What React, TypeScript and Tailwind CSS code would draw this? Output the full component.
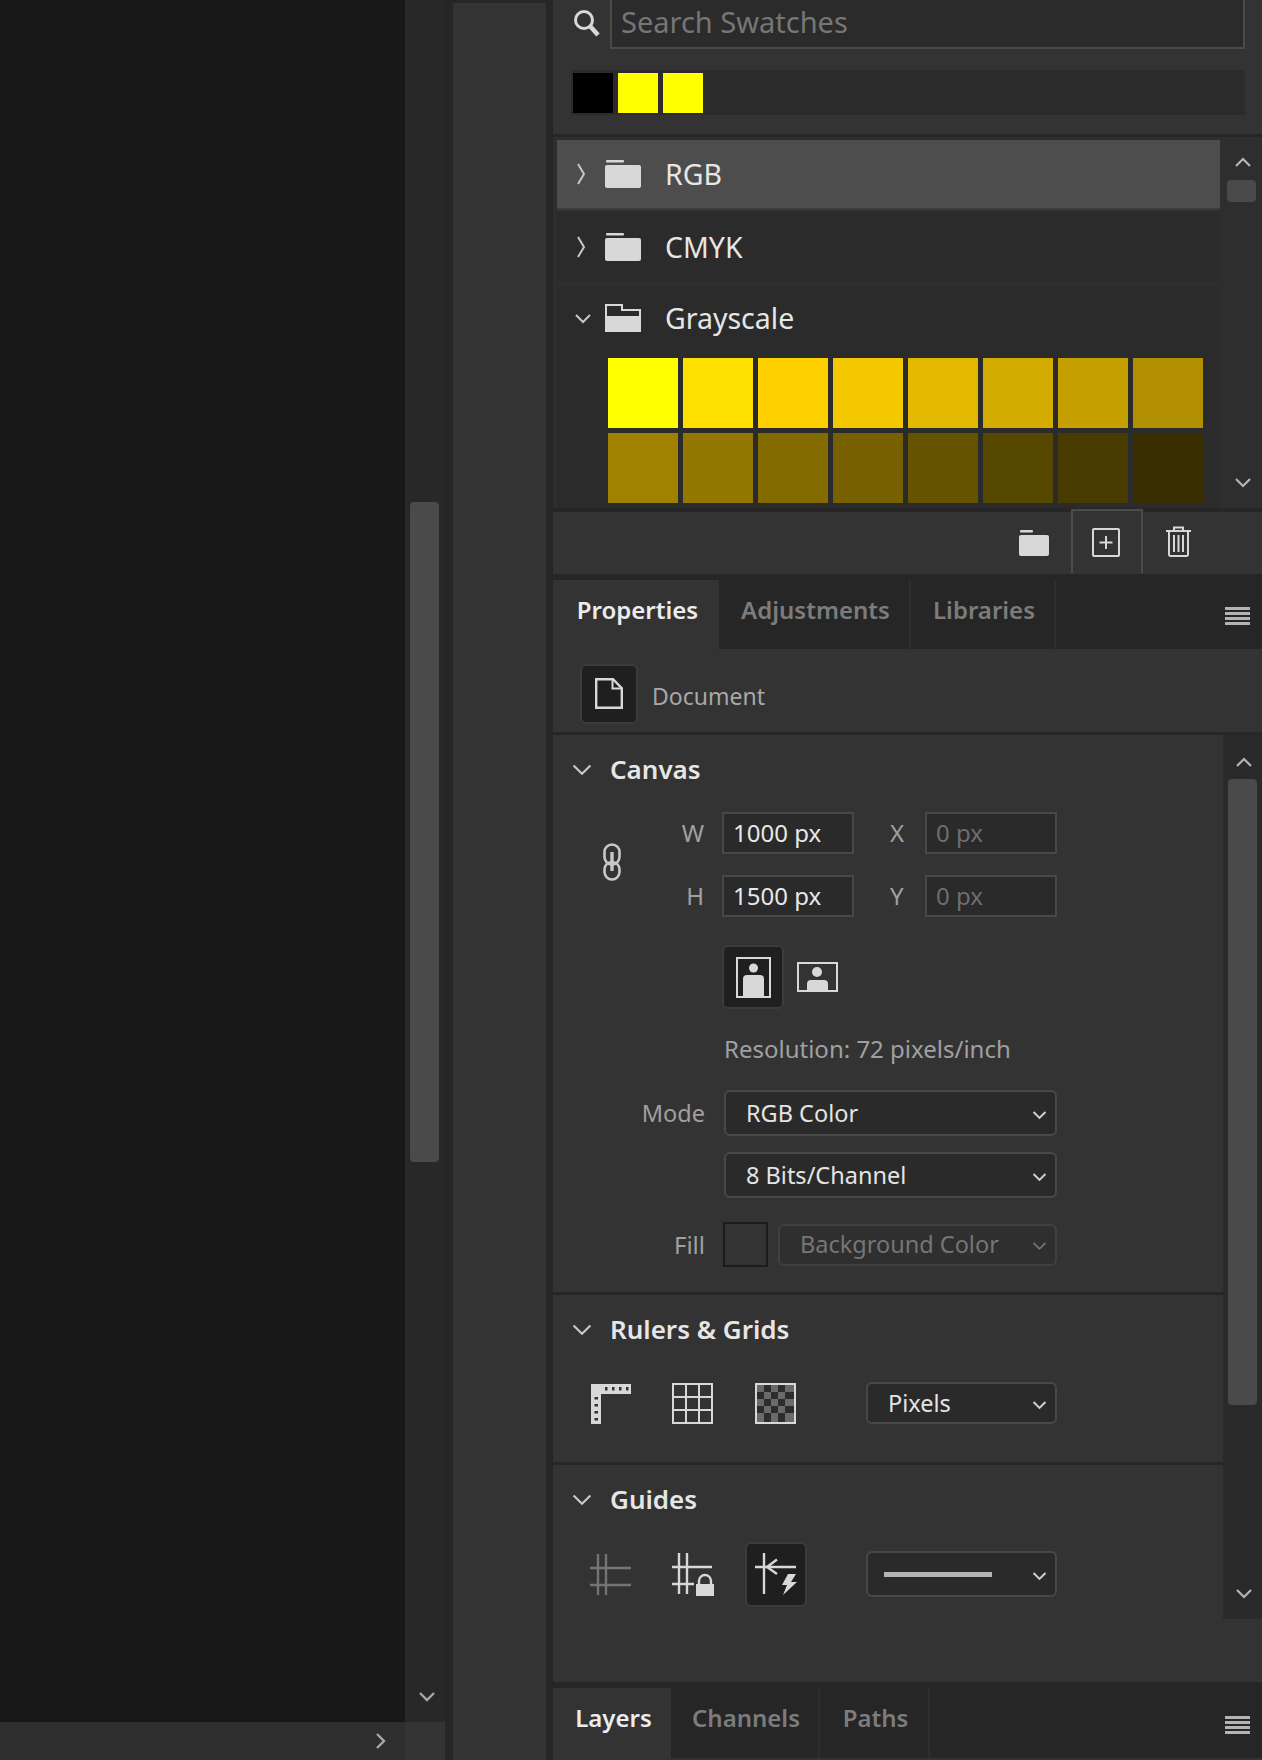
const font = "font-['Noto_Sans','Open_Sans',sans-serif]";

const row1 = ["#ffff00", "#ffe000", "#ffd000", "#f4c800", "#e3b800", "#d4ab00", "#c6a000", "#b18f00"];
const row2 = ["#a08200", "#927700", "#846b00", "#766000", "#655300", "#574800", "#483b00", "#382e00"];

const Chevron = ({ dir = "down", size = 20, color = "#c4c4c4", sw = 2 }: { dir?: string; size?: number; color?: string; sw?: number }) => {
  const d: Record<string, string> = {
    down: "M3 7l7 7 7-7",
    up: "M3 13l7-7 7 7",
    right: "M7 3l7 7-7 7",
  };
  return (
    <svg width={size} height={size} viewBox="0 0 20 20" fill="none" className="shrink-0">
      <path d={d[dir]} stroke={color} strokeWidth={sw} />
    </svg>
  );
};

const Hamburger = () => (
  <div className="flex flex-col gap-[2px] w-[25px]">
    <div className="h-[3px] bg-[#b4b4b4]" />
    <div className="h-[3px] bg-[#b4b4b4]" />
    <div className="h-[3px] bg-[#b4b4b4]" />
    <div className="h-[3px] bg-[#b4b4b4]" />
  </div>
);

const FolderClosed = () => (
  <svg width="36" height="28" viewBox="0 0 36 28" className="shrink-0">
    <rect x="1" y="0" width="18" height="2.5" rx="1" fill="#d8d8d8" />
    <rect x="0" y="5" width="36" height="23" rx="2" fill="#d8d8d8" />
  </svg>
);

const FolderOpen = () => (
  <svg width="36" height="28" viewBox="0 0 36 28" className="shrink-0">
    <path d="M1 1h16v5h18v21H1z" fill="none" stroke="#d8d8d8" strokeWidth="2" />
    <rect x="0" y="12" width="36" height="16" rx="2" fill="#d8d8d8" />
  </svg>
);

const Field = ({ value, dim }: { value: string; dim?: boolean }) => (
  <div className={`w-[132px] h-[42px] border-2 border-[#484848] bg-[#2a2a2a] flex items-center pl-[9px] text-[24px] ${dim ? "text-[#6e6e6e]" : "text-[#e8e8e8]"}`}>
    {value}
  </div>
);

const Select = ({ className, children }: { className: string; children: React.ReactNode }) => (
  <div className={`border-2 border-[#484848] rounded-md bg-[#2a2a2a] flex items-center justify-between pr-[7px] text-[23.5px] text-[#e4e4e4] ${className}`}>
    {children}
    <div className="pt-[2px]">
      <Chevron size={17} color="#d0d0d0" sw={2.4} />
    </div>
  </div>
);

const SwatchGroup = ({ name, open, active }: { name: string; open?: boolean; active?: boolean }) => (
  <div className={`flex items-center pl-[16px] ${open ? "h-[67px] pb-[3px]" : "h-[68px]"} ${active ? "bg-[#4d4d4d]" : "bg-[#2b2b2b]"}`}>
    {open ? (
      <Chevron size={20} color="#c8c8c8" />
    ) : (
      <svg width="20" height="24" viewBox="0 0 20 24" fill="none" className="shrink-0">
        <path d="M5 2l6 10-6 10" stroke="#c8c8c8" strokeWidth="2" />
      </svg>
    )}
    <div className="ml-[12px]">{open ? <FolderOpen /> : <FolderClosed />}</div>
    <span className="ml-[24px] pt-[2px] text-[28.500px] text-[#e6e6e6]">{name}</span>
  </div>
);

const Tabs = ({ tabs, widths }: { tabs: string[]; widths: string[] }) => (
  <div className="flex items-stretch h-[70px] bg-[#262626]">
    {tabs.map((t, i) => (
      <div
        key={t}
        className={`${widths[i]} flex items-center justify-center pb-[10px] pl-[3px] text-[24px] font-semibold ${i === 0 ? "bg-[#333333] text-[#ececec]" : "text-[#7c7c7c] border-r-2 border-[#2e2e2e]"}`}
      >
        {t}
      </div>
    ))}
    <div className="flex-1 flex items-center justify-end pr-[12px] pt-[3px]">
      <Hamburger />
    </div>
  </div>
);

const SectionHead = ({ title }: { title: string }) => (
  <div className="flex items-center h-[34px] pl-[17px]">
    <Chevron size={24} color="#c8c8c8" sw={1.8} />
    <span className="ml-[16px] text-[26px] font-semibold text-[#e6e6e6]">{title}</span>
  </div>
);

const Divider = () => <div className="h-[3px] bg-[#262626]" />;

export default function App() {
  return (
    <div className={`flex w-[1262px] h-[1760px] overflow-hidden bg-[#262626] ${font}`}>
      {/* canvas edge + scroller */}
      <div className="w-[445px] flex flex-col shrink-0">
        <div className="flex-1 flex">
          <div className="w-[405px] bg-[#181818]" />
          <div className="w-[40px] bg-[#282828] flex flex-col items-center pt-[502px] pr-[1px]">
            <div className="w-[29px] h-[660px] bg-[#4a4a4a] rounded-sm" />
            <div className="mt-[524px] ml-[4px]">
              <Chevron size={20} color="#a8a8a8" sw={2.4} />
            </div>
          </div>
        </div>
        <div className="h-[38px] flex">
          <div className="w-[405px] bg-[#2e2e2e] flex items-center justify-end pr-[15px]">
            <Chevron dir="right" size={20} color="#a8a8a8" sw={2.4} />
          </div>
          <div className="w-[40px] bg-[#333333]" />
        </div>
      </div>

      {/* tool strip */}
      <div className="ml-[8px] mt-[3px] w-[93px] bg-[#333333] shrink-0" />

      {/* right dock */}
      <div className="ml-[7px] w-[709px] shrink-0 flex flex-col bg-[#262626]">
        {/* swatches */}
        <div className="h-[134px] bg-[#333333] pl-[18px] pr-[17px]">
          <div className="flex items-center h-[49px]">
            <svg width="27" height="28" viewBox="0 0 27 28" fill="none" className="shrink-0 mb-[4px] ml-[2px]">
              <circle cx="11" cy="11" r="8.5" stroke="#d8d8d8" strokeWidth="3" />
              <path d="M17 17l8 9" stroke="#d8d8d8" strokeWidth="4.5" />
            </svg>
            <div className="ml-[10px] flex-1 h-[49px] border-b-2 border-l-2 border-r-2 border-[#4a4a4a] bg-[#2b2b2b] flex items-center pl-[9px] pb-[4px] text-[29px] text-[#767676]">
              Search Swatches
            </div>
          </div>
          <div className="mt-[21px] h-[45px] bg-[#2b2b2b] flex items-center gap-[5px] pl-[2px]">
            <div className="w-[40px] h-[40px] bg-black" />
            <div className="w-[40px] h-[40px] bg-[#ffff00]" />
            <div className="w-[40px] h-[40px] bg-[#ffff00]" />
          </div>
        </div>
        <div className="h-[3px]" />
        <div className="h-[371px] flex bg-[#2e2e2e]">
          <div className="w-[667px] pl-[4px] pt-[3px]">
            <SwatchGroup name="RGB" active />
            <div className="h-[4px] border-t-2 border-[#3c3c3c]" />
            <div className="h-[69px] pt-[1px]">
              <SwatchGroup name="CMYK" />
            </div>
            <div className="h-[5px]" />
            <SwatchGroup name="Grayscale" open />
            <div className="h-[155px] bg-[#2b2b2b] pl-[51px] pt-[5px] flex flex-col gap-[5px]">
              {[row1, row2].map((row, r) => (
                <div key={r} className="flex gap-[5px]">
                  {row.map((c, i) => (
                    <div key={i} className="w-[70px] h-[70px]" style={{ background: c }} />
                  ))}
                </div>
              ))}
            </div>
          </div>
          <div className="w-[42px] flex flex-col items-center pt-[16px]">
            <div className="ml-[4px]">
              <Chevron dir="up" size={20} color="#b4b4b4" sw={2.2} />
            </div>
            <div className="mt-[7px] w-[29px] h-[22px] bg-[#4a4a4a] rounded-sm" />
            <div className="mt-[270px] ml-[4px]">
              <Chevron size={20} color="#b4b4b4" sw={2.2} />
            </div>
          </div>
        </div>
        <div className="h-[4px]" />
        {/* swatch footer */}
        <div className="h-[62px] bg-[#333333] flex items-center">
          <div className="ml-[466px]">
            <svg width="30" height="26" viewBox="0 0 30 26">
              <rect x="1" y="0" width="13" height="2.5" rx="1" fill="#d8d8d8" />
              <rect x="0" y="5" width="30" height="21" rx="2" fill="#d8d8d8" />
            </svg>
          </div>
          <div className="ml-[22px] w-[72px] h-[64px] -mt-[3px] border-t-2 border-l-2 border-r-2 border-[#4c4c4c] bg-[#333333] flex items-center justify-center pr-[2px]">
            <svg width="28" height="29" viewBox="0 0 28 29" fill="none">
              <rect x="1" y="1" width="26" height="27" rx="1" stroke="#d8d8d8" strokeWidth="2" />
              <path d="M14 8v13M7.5 14.5h13" stroke="#d8d8d8" strokeWidth="2" />
            </svg>
          </div>
          <div className="ml-[22px] -mt-[3px]">
            <svg width="27" height="32" viewBox="0 0 27 32" fill="none">
              <path d="M1 6h25M9 6V2.5h9V6" stroke="#d8d8d8" strokeWidth="2" />
              <path d="M4 6v23.5a1.5 1.5 0 0 0 1.5 1.5h16a1.5 1.5 0 0 0 1.5-1.5V6" stroke="#d8d8d8" strokeWidth="2" />
              <path d="M9 10v17M13.500 10v17M18 10v17" stroke="#d8d8d8" strokeWidth="2" />
            </svg>
          </div>
        </div>
        <div className="h-[6px]" />

        {/* properties */}
        <Tabs tabs={["Properties", "Adjustments", "Libraries"]} widths={["w-[166px]", "w-[192px]", "w-[145px]"]} />
        <div className="h-[83px] bg-[#333333] flex items-center pl-[27px] pt-[6px]">
          <div className="w-[58px] h-[60px] bg-[#1f1f1f] border-2 border-[#3c3c3c] rounded-md flex items-center justify-center">
            <svg width="28" height="31" viewBox="0 0 28 31" fill="none">
              <path d="M1.200 1.200h16.800l8.800 9v19.600h-25.600z" stroke="#d8d8d8" strokeWidth="2.400" />
              <path d="M17.500 1.500v9h9" stroke="#d8d8d8" strokeWidth="2" />
            </svg>
          </div>
          <span className="ml-[14px] pt-[4px] text-[23px] text-[#a8a8a8]">Document</span>
        </div>
        <div className="h-[3px]" />

        <div className="h-[884px] flex bg-[#333333]">
          <div className="w-[670px]">
            {/* canvas */}
            <div className="pt-[17px] pb-[25px]">
              <SectionHead title="Canvas" />
              <div className="mt-[26px] flex items-center pl-[49px]">
                <svg width="20" height="38" viewBox="0 0 20 38" fill="none" className="shrink-0 mb-[6px]">
                  <rect x="2.500" y="1.500" width="15" height="20" rx="7.500" stroke="#c8c8c8" strokeWidth="2.600" />
                  <rect x="2.500" y="19" width="15" height="17.500" rx="7.500" stroke="#c8c8c8" strokeWidth="2.600" />
                  <path d="M10 9v19" stroke="#c8c8c8" strokeWidth="3.400" />
                </svg>
                <div className="flex flex-col gap-[21px]">
                  {[["W", "1000 px", "X"], ["H", "1500 px", "Y"]].map(([a, v, b]) => (
                    <div key={a} className="flex items-center">
                      <div className="w-[82px] mr-[18px] text-right text-[24px] text-[#a0a0a0]">{a}</div>
                      <Field value={v} />
                      <div className="w-[35px] ml-[36px] text-[24px] text-[#a0a0a0]">{b}</div>
                      <Field value="0 px" dim />
                    </div>
                  ))}
                </div>
              </div>
              <div className="mt-[28px] ml-[169px] flex items-center">
                <div className="w-[62px] h-[64px] bg-[#1f1f1f] border-2 border-[#3c3c3c] rounded-md flex items-center justify-center">
                  <svg width="35" height="41" viewBox="0 0 35 41" fill="none">
                    <rect x="1" y="1" width="33" height="39" stroke="#d8d8d8" strokeWidth="2" />
                    <circle cx="17.500" cy="11" r="4.500" fill="#d8d8d8" />
                    <path d="M7 40V22q0-4 4-4h13q4 0 4 4v18z" fill="#d8d8d8" />
                  </svg>
                </div>
                <div className="ml-[13px]">
                  <svg width="41" height="30" viewBox="0 0 41 30" fill="none">
                    <rect x="1" y="1" width="39" height="28" stroke="#d8d8d8" strokeWidth="2" />
                    <circle cx="20" cy="10" r="5" fill="#d8d8d8" />
                    <path d="M10 29V22q0-4 4-4h13q4 0 4 4v7z" fill="#d8d8d8" />
                  </svg>
                </div>
              </div>
              <div className="mt-[23px] ml-[171px] h-[34px] flex items-center text-[24px] text-[#a0a0a0]">
                Resolution: 72 pixels/inch
              </div>
              <div className="mt-[24px] flex items-center">
                <div className="w-[152px] mr-[19px] text-right text-[23.500px] text-[#a0a0a0]">Mode</div>
                <Select className="w-[333px] h-[46px] pl-[20px]">RGB Color</Select>
              </div>
              <div className="mt-[16px] ml-[171px]">
                <Select className="w-[333px] h-[46px] pl-[20px]">8 Bits/Channel</Select>
              </div>
              <div className="mt-[24px] flex items-center">
                <div className="w-[152px] mr-[18px] text-right text-[24px] text-[#a0a0a0]">Fill</div>
                <div className="w-[45px] h-[45px] border-2 border-[#1c1c1c] bg-[#333333]" />
                <div className="ml-[10px] w-[279px] h-[42px] border-2 border-[#404040] rounded-md bg-[#2f2f2f] flex items-center justify-between pl-[20px] pr-[7px] text-[23.500px] text-[#767676]">
                  Background Color
                  <div className="pt-[2px]">
                    <Chevron size={17} color="#767676" sw={2} />
                  </div>
                </div>
              </div>
            </div>
            <Divider />
            {/* rulers */}
            <div className="pt-[17px] pb-[38px]">
              <SectionHead title="Rulers & Grids" />
              <div className="mt-[36px] flex items-center pl-[37px] h-[42px]">
                <svg width="41" height="41" viewBox="0 0 41 41" className="shrink-0 mt-[1px]">
                  <path d="M1 1h40v10H11v30H1z" fill="#d8d8d8" />
                  <g fill="#333333">
                    <rect x="15" y="4" width="2.500" height="3.500" />
                    <rect x="22" y="4" width="2.500" height="3.500" />
                    <rect x="29" y="4" width="2.500" height="3.500" />
                    <rect x="36" y="4" width="2.500" height="3.500" />
                    <rect x="4.500" y="14" width="3.500" height="2.500" />
                    <rect x="4.500" y="21" width="3.500" height="2.500" />
                    <rect x="4.500" y="28" width="3.500" height="2.500" />
                    <rect x="4.500" y="35" width="3.500" height="2.500" />
                  </g>
                </svg>
                <svg width="41" height="41" viewBox="0 0 41 41" fill="none" className="ml-[41px] shrink-0 mt-[1px]">
                  <path d="M1 1h39v39H1zM14 1v39M27 1v39M1 14h39M1 27h39" stroke="#d8d8d8" strokeWidth="2" />
                </svg>
                <svg width="41" height="41" viewBox="0 0 41 41" className="ml-[42px] shrink-0 mt-[1px]">
                  <rect width="41" height="41" fill="#d8d8d8" />
                  <rect x="2" y="2" width="37" height="37" fill="#6a6a6a" />
                  <g fill="#2c2c2c">
                    <rect x="9" y="2" width="7" height="7" />
                    <rect x="23" y="2" width="7" height="7" />
                    <rect x="2" y="9" width="7" height="7" />
                    <rect x="16" y="9" width="7" height="7" />
                    <rect x="30" y="9" width="9" height="7" />
                    <rect x="9" y="16" width="7" height="7" />
                    <rect x="23" y="16" width="7" height="7" />
                    <rect x="2" y="23" width="7" height="7" />
                    <rect x="16" y="23" width="7" height="7" />
                    <rect x="30" y="23" width="9" height="7" />
                    <rect x="9" y="30" width="7" height="9" />
                    <rect x="23" y="30" width="7" height="9" />
                  </g>
                </svg>
                <Select className="ml-[70px] w-[191px] h-[42px] pl-[20px]">Pixels</Select>
              </div>
            </div>
            <Divider />
            {/* guides */}
            <div className="pt-[17px]">
              <SectionHead title="Guides" />
              <div className="mt-[25px] flex items-center pl-[37px] h-[66px]">
                <svg width="41" height="41" viewBox="0 0 41 41" fill="none" className="shrink-0">
                  <path d="M8 0v41M16 0v41M0 14h41M0 31h41" stroke="#747474" strokeWidth="2.400" />
                </svg>
                <svg width="44" height="43" viewBox="0 0 44 43" fill="none" className="ml-[41px] shrink-0">
                  <path d="M7 0v41M15 0v41M0 14h40M0 31h22" stroke="#d8d8d8" strokeWidth="2.400" />
                  <path d="M27 32v-4a6 6 0 0 1 12 0v4" stroke="#d8d8d8" strokeWidth="2.400" />
                  <rect x="24" y="31" width="18" height="12" fill="#d8d8d8" />
                </svg>
                <div className="ml-[29px] w-[62px] h-[65px] bg-[#1f1f1f] border-2 border-[#3c3c3c] rounded-md flex items-center justify-center shrink-0">
                  <svg width="42" height="42" viewBox="0 0 42 42" fill="none">
                    <path d="M9 0v41M0 14h41" stroke="#d8d8d8" strokeWidth="2.400" />
                    <path d="M22 6.500L12 14l10 7" stroke="#d8d8d8" strokeWidth="2.400" />
                    <path d="M33 21h8l-5 8h6l-14 13 4-10h-5z" fill="#d8d8d8" />
                  </svg>
                </div>
                <Select className="ml-[59px] w-[191px] h-[46px] pl-[16px]">
                  <div className="w-[108px] h-[5px] bg-[#b4b4b4]" />
                </Select>
              </div>
            </div>
          </div>
          <div className="w-[39px] bg-[#2a2a2a] flex flex-col items-center self-stretch h-[884px] pt-[18px]">
            <div className="ml-[2px]">
              <Chevron dir="up" size={20} color="#b4b4b4" sw={2.2} />
            </div>
            <div className="mt-[6px] w-[29px] h-[626px] bg-[#4a4a4a] rounded-sm" />
            <div className="mt-[178px] ml-[2px]">
              <Chevron size={20} color="#b4b4b4" sw={2.2} />
            </div>
          </div>
        </div>
        <div className="h-[63px] bg-[#333333]" />
        <div className="h-[6px]" />
        <Tabs tabs={["Layers", "Channels", "Paths"]} widths={["w-[118px]", "w-[149px]", "w-[110px]"]} />
        <div className="h-[2px] bg-[#333333]" />
      </div>
    </div>
  );
}
